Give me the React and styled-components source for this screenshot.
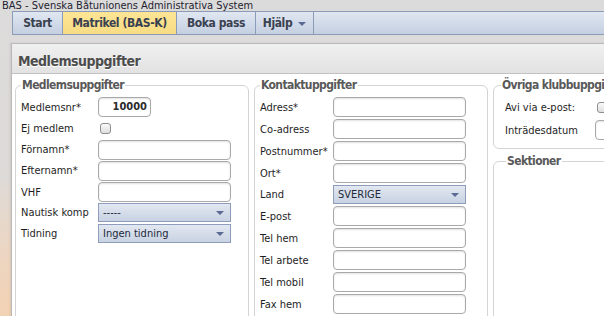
import React from "react"
import styled, { createGlobalStyle } from "styled-components"

const GlobalStyle = createGlobalStyle`
  html, body {
    margin: 0;
    padding: 0;
    overflow: hidden;
  }
  body {
    width: 604px;
    height: 316px;
    font-family: "DejaVu Sans Condensed", "DejaVu Sans", sans-serif;
    background: linear-gradient(180deg, #dcdbdb 0%, #dddad8 55%, #ecd6c2 80%, #f3d2b4 100%);
    color: #222;
  }
`

const Page = styled.div`
  width: 604px;
  height: 316px;
  overflow: hidden;
`

const AppTitle = styled.div`
  font-size: 11px;
  line-height: 11px;
  height: 11px;
  padding-left: 2px;
  color: #1c2330;
  white-space: nowrap;
`

const NavBar = styled.nav`
  display: flex;
  margin-left: 12px;
  height: 22px;
  border: 1px solid #8c9cb8;
  border-right: none;
  background: linear-gradient(180deg, #e0e7f1 0%, #c4cfe1 100%);
  width: 800px;
`

const NavItem = styled.div`
  display: flex;
  align-items: center;
  gap: 6px;
  width: ${p => p.w}px;
  justify-content: center;
  box-sizing: border-box;
  border-right: 1px solid #8c9cb8;
  font-size: 12px;
  font-weight: bold;
  letter-spacing: -0.4px;
  color: #3a4150;
  white-space: nowrap;
  background: ${p =>
    p.active ? "linear-gradient(180deg, #fde596 0%, #f8dc84 100%)" : "transparent"};
`

const Caret = styled.span`
  width: 0;
  height: 0;
  border-left: 4px solid transparent;
  border-right: 4px solid transparent;
  border-top: 4px solid #5b6a93;
  margin-top: 1px;
`

const Panel = styled.section`
  margin: 8px 0 0 11px;
  width: 820px;
  background: #fff;
  border: 1px solid #b9b9b9;
  box-shadow: -1px 0 2px rgba(0, 0, 0, 0.08);
`

const PanelHeader = styled.h2`
  margin: 0;
  height: 30px;
  box-sizing: border-box;
  display: flex;
  align-items: center;
  padding: 4px 0 0 6px;
  font-size: 14px;
  letter-spacing: -0.5px;
  font-weight: bold;
  color: #4c4c4c;
  text-shadow: 0 1px 0 #fff;
  background: linear-gradient(180deg, #f0f0f0 0%, #e2e2e2 100%);
  border-bottom: 1px solid #c2c2c2;
`

const PanelBody = styled.div`
  display: grid;
  grid-template-columns: 234px 234px 234px;
  column-gap: 5px;
  align-items: start;
  padding: 5px 0 0 3px;
  height: 260px;
`

const Column = styled.div`
  display: flex;
  flex-direction: column;
  gap: 6px;
`

const Fieldset = styled.fieldset`
  margin: 0;
  border: 1px solid #d4d4d4;
  border-radius: 6px;
  padding: 5px 6px 8px ${p => p.pl ?? 5}px;
  min-height: ${p => p.minH || 0}px;
  display: flex;
  flex-direction: column;
  gap: ${p => p.gap ?? 2}px;
`

const Legend = styled.legend`
  font-size: 12px;
  line-height: 13px;
  font-weight: bold;
  letter-spacing: -0.6px;
  color: #595959;
  padding: 0 1px;
  margin-left: ${p => p.ml ?? 0}px;
  white-space: nowrap;
`

const Row = styled.div`
  display: grid;
  grid-template-columns: ${p => p.labelW}px 1fr;
  align-items: center;
  min-height: ${p => p.h || 20}px;
`

const Label = styled.label`
  font-size: 11px;
  color: #1e1e1e;
  white-space: nowrap;
`

const TextInput = styled.div`
  width: ${p => p.w || 133}px;
  height: 20px;
  box-sizing: border-box;
  border: 1px solid #a9a9a9;
  border-radius: 4px;
  background: #fff;
  box-shadow: inset 0 1px 2px rgba(0, 0, 0, 0.12);
  font-size: 11px;
  font-weight: bold;
  color: #2a2a2a;
  text-align: right;
  padding: 0 3px;
  line-height: 18px;
`

const CheckBox = styled.div`
  width: 11px;
  height: 11px;
  margin-left: 2px;
  box-sizing: border-box;
  border: 1px solid #8e8e8e;
  border-radius: 3px;
  background: linear-gradient(180deg, #fafafa 0%, #dedede 100%);
`

const Select = styled.div`
  width: 133px;
  height: 19px;
  box-sizing: border-box;
  display: flex;
  align-items: center;
  justify-content: space-between;
  padding: 0 6px 0 4px;
  border: 1px solid #8e9dbb;
  background: linear-gradient(180deg, #e2e8f1 0%, #c8d2e2 100%);
  font-size: 11px;
  color: #222a3a;
`

const Spacer = styled.div`
  height: ${p => p.h}px;
`

const memberRows = [
  { label: "Medlemsnr*", kind: "input", value: "10000", w: 53 },
  { label: "Ej medlem", kind: "check" },
  { label: "Förnamn*", kind: "input" },
  { label: "Efternamn*", kind: "input" },
  { label: "VHF", kind: "input" },
  { label: "Nautisk komp", kind: "select", value: "-----" },
  { label: "Tidning", kind: "select", value: "Ingen tidning" },
]

const contactRows = [
  { label: "Adress*", kind: "input" },
  { label: "Co-adress", kind: "input" },
  { label: "Postnummer*", kind: "input" },
  { label: "Ort*", kind: "input" },
  { label: "Land", kind: "select", value: "SVERIGE" },
  { label: "E-post", kind: "input" },
  { label: "Tel hem", kind: "input" },
  { label: "Tel arbete", kind: "input" },
  { label: "Tel mobil", kind: "input" },
  { label: "Fax hem", kind: "input" },
  { label: "Fax arbete", kind: "input" },
]

const Control = ({ row }) => {
  if (row.kind === "check") return <CheckBox />
  if (row.kind === "select")
    return (
      <Select>
        <span>{row.value}</span>
        <Caret />
      </Select>
    )
  return <TextInput w={row.w}>{row.value}</TextInput>
}

const FormRows = ({ rows, labelW }) =>
  rows.map(row => (
    <Row key={row.label} labelW={labelW} h={row.kind === "select" ? 19 : 20}>
      <Label>{row.label}</Label>
      <Control row={row} />
    </Row>
  ))

export default function App() {
  return (
    <Page>
      <GlobalStyle />
      <AppTitle>BAS - Svenska Båtunionens Administrativa System</AppTitle>
      <NavBar>
        <NavItem w={50}>Start</NavItem>
        <NavItem w={114} active>
          Matrikel (BAS-K)
        </NavItem>
        <NavItem w={79}>Boka pass</NavItem>
        <NavItem w={58}>
          Hjälp <Caret />
        </NavItem>
      </NavBar>
      <Panel>
        <PanelHeader>Medlemsuppgifter</PanelHeader>
        <PanelBody>
          <Fieldset gap={1.3} minH={260}>
            <Legend>Medlemsuppgifter</Legend>
            <FormRows rows={memberRows} labelW={77} />
          </Fieldset>
          <Fieldset minH={260}>
            <Legend>Kontaktuppgifter</Legend>
            <FormRows rows={contactRows} labelW={73} />
          </Fieldset>
          <Column>
            <Fieldset gap={3} pl={11}>
              <Legend ml={-4}>Övriga klubbuppgifter</Legend>
              <Row labelW={90} h={20}>
                <Label>Avi via e-post:</Label>
                <CheckBox />
              </Row>
              <Row labelW={90} h={20}>
                <Label>Inträdesdatum</Label>
                <TextInput w={100} />
              </Row>
            </Fieldset>
            <Fieldset>
              <Legend ml={7}>Sektioner</Legend>
              <Spacer h={160} />
            </Fieldset>
          </Column>
        </PanelBody>
      </Panel>
    </Page>
  )
}
